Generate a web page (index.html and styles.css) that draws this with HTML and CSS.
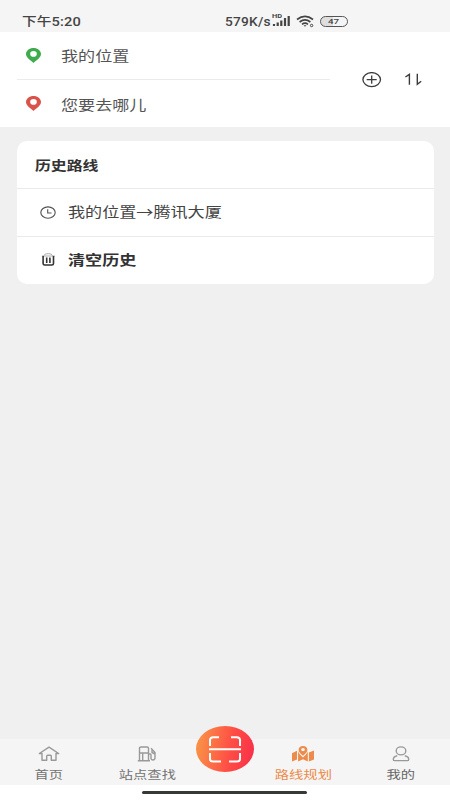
FILE: index.html
```html
<!DOCTYPE html>
<html lang="zh-CN">
<head>
<meta charset="utf-8">
<title>路线规划</title>
<link rel="stylesheet" href="styles.css">
</head>
<body>
<div class="app">
  <header class="status">
    <span class="wide time">下午5:20</span>
    <div class="signals">
      <span class="wide speed">579K/s</span>
      <svg class="cell" width="19" height="14" viewBox="0 0 19 14">
        <text x="0" y="5" textLength="10" lengthAdjust="spacingAndGlyphs">HD</text>
        <path d="M2 13V11M5.7 13V9.5M9.3 13V7.5M13 13V5M16.7 13V3" stroke="#444" stroke-width="2.2"/>
      </svg>
      <svg class="wifi" width="19" height="13" viewBox="0 0 19 13" fill="none" stroke="#444" stroke-width="1.7">
        <path d="M1 4.5Q9-1.8 17 4.5M3.6 7Q9 2.8 14.4 7M6 9.3Q9 7 12 9.3"/>
        <path d="M7.5 10.2H10.5L9 11.8Z" fill="#444" stroke="none"/>
        <circle cx="15.6" cy="10.5" r="1.2" stroke-width="1"/>
      </svg>
      <div class="battery"><span class="wide">47</span></div>
    </div>
  </header>

  <section class="route">
    <div class="places">
      <div class="place">
        <svg width="15" height="15" viewBox="0 0 15 15"><path fill="#3eac4d" fill-rule="evenodd" d="M7.5 0C3.3 0 0 2.6 0 6.1C0 9.4 4.2 12.2 7.5 15C10.8 12.2 15 9.4 15 6.1C15 2.6 11.7 0 7.5 0ZM7.5 3.1A3.3 2.8 0 1 1 7.5 8.7A3.3 2.8 0 1 1 7.5 3.1Z"/></svg>
        <span class="wide">我的位置</span>
      </div>
      <div class="place">
        <svg width="15" height="15" viewBox="0 0 15 15"><path fill="#d9534b" fill-rule="evenodd" d="M7.5 0C3.3 0 0 2.6 0 6.1C0 9.4 4.2 12.2 7.5 15C10.8 12.2 15 9.4 15 6.1C15 2.6 11.7 0 7.5 0ZM7.5 3.1A3.3 2.8 0 1 1 7.5 8.7A3.3 2.8 0 1 1 7.5 3.1Z"/></svg>
        <span class="wide">您要去哪儿</span>
      </div>
    </div>
    <div class="actions">
      <svg width="20" height="16" viewBox="0 0 20 16" fill="none" stroke="#3c3c3c" stroke-width="1.3"><ellipse cx="9.7" cy="7.6" rx="8.8" ry="7"/><path d="M4.7 7.6H14.7M9.7 3.4V11.8"/></svg>
      <svg width="18" height="13" viewBox="0 0 18 13" fill="none" stroke="#3c3c3c" stroke-width="1.4"><path d="M.4 4L4.4 1.4V11.8M12.3 .8V11.3L16.2 8.3"/></svg>
    </div>
  </section>

  <main class="content">
    <section class="card">
      <h1 class="row title"><span class="wide">历史路线</span></h1>
      <div class="row">
        <svg width="16" height="13" viewBox="0 0 16 13" fill="none" stroke="#555" stroke-width="1.15"><ellipse cx="8" cy="6.5" rx="7.2" ry="5.7"/><path d="M7.7 3.2V7H11.5"/></svg>
        <span class="wide">我的位置→腾讯大厦</span>
      </div>
      <div class="row clear">
        <svg width="16" height="14" viewBox="0 0 16 14" fill="none" stroke="#333"><path d="M4 2.6Q4.2 .6 8.2.6T12.4 2.6" stroke="#999" stroke-width=".8"/><path d="M1.8 3H14.8" stroke="#999" stroke-width=".8"/><path d="M3.1 3V10.6Q3.1 12 4.8 12H11.8Q13.5 12 13.5 10.6V3" stroke-width="1.6"/><path d="M6.7 4.4V10M9.9 4.4V10" stroke-width="1.6"/></svg>
        <span class="wide">清空历史</span>
      </div>
    </section>
  </main>

  <nav class="tabs">
    <div class="tab home">
      <svg width="22" height="16" viewBox="0 0 22 16" fill="none" stroke="#999" stroke-width="1.4" stroke-linejoin="round"><path d="M4 7.5H1.3L11 1.2L20.7 7.5H18V14.2H13.3V10.2Q13.3 9.3 12.3 9.3H9.7Q8.7 9.3 8.7 10.2V14.2H4Z"/></svg>
      <span class="wide">首页</span>
    </div>
    <div class="tab station">
      <svg width="20" height="16" viewBox="0 0 20 16" fill="none" stroke="#999" stroke-width="1.4"><path d="M2.5 15V2.2Q2.5 1 4 1H10Q11.5 1 11.5 2.2V15M.8 14.8H13M2.5 7H11.5M5.7 7V14.5M11.5 8H13.2Q14 8 14 9V12.6Q14 14 15.8 14T18 12.3V6.5L14 2.2M15 3.3V6.5L18 8"/></svg>
      <span class="wide">站点查找</span>
    </div>
    <div class="scan">
      <svg width="32" height="27" viewBox="0 0 32 27" fill="none" stroke="#fff" stroke-width="2"><path d="M1 10V4Q1 1.2 4.3 1.2H10M22 1.2H27.7Q31 1.2 31 4V10M1 17V23Q1 25.5 4.3 25.5H12M20 25.5H27.7Q31 25.5 31 23V17M0 13.3H32"/></svg>
    </div>
    <div class="tab plan">
      <svg width="22" height="16" viewBox="0 0 22 16" fill="#ec8b4a"><path d="M0 7.2L5 4.8V13.4L0 15.4ZM6.1 5.1C6.5 7.6 9 9.7 11 11.5C13 9.7 15.2 7.7 15.8 5.3V15.4L11 13.2L6.1 15.4ZM16.9 6.4L22 4.6V13.4L16.9 15.4Z"/><path fill-rule="evenodd" d="M11 0C8.5 0 6.6 1.5 6.6 3.7C6.6 6 9 8 11 9.8C13 8 15.4 6 15.4 3.7C15.4 1.5 13.5 0 11 0ZM11 2A1.9 1.6 0 1 1 11 5.2A1.9 1.6 0 1 1 11 2Z"/></svg>
      <span class="wide">路线规划</span>
    </div>
    <div class="tab mine">
      <svg width="18" height="16" viewBox="0 0 18 16" fill="none" stroke="#999" stroke-width="1.4"><ellipse cx="9" cy="4.9" rx="4.8" ry="4"/><path d="M5.2 9.8Q1.3 10.7 1.3 13.4Q1.3 14.6 2.8 14.6H15.2Q16.7 14.6 16.7 13.4Q16.7 10.7 12.8 9.8"/></svg>
      <span class="wide">我的</span>
    </div>
  </nav>
  <footer class="gesture"><div class="handle"></div></footer>
</div>
</body>
</html>
```
FILE: styles.css
```css
* { box-sizing: border-box; }
body { margin: 0; font-family: Roboto, "Noto Sans CJK SC", sans-serif; color: #444; }
svg { display: block; flex: none; }
.app { width: 450px; height: 800px; display: flex; flex-direction: column; background: #f0f0f0; overflow: hidden; }

/* Expanded letterforms */
.wide { display: inline-block; white-space: nowrap; transform: scaleX(1.22); transform-origin: left center; }

.status { height: 32px; flex: none; display: flex; justify-content: space-between; padding: 12px 102px 0 22px; background: #f5f5f5; line-height: 20px; }
.time { font-size: 12px; font-weight: 500; letter-spacing: .1px; }
.signals { display: flex; align-items: center; height: 20px; margin-top: -1px; }
.speed { width: 46px; font-size: 12px; font-weight: 500; letter-spacing: .2px; transform: scaleX(1.14); margin-top: 2px; }
.cell { margin: -2px 5px 0 1px; }
.cell text { font: 700 6px Roboto, sans-serif; fill: #444; }
.wifi { margin-right: 5px; }
.battery { width: 28px; height: 11px; border: 1px solid #555; border-radius: 6px; background: linear-gradient(90deg, #dedede 48%, #f5f5f5 48%); display: flex; align-items: center; justify-content: center; font-size: 8px; font-weight: 500; line-height: 9px; }
.battery .wide { transform-origin: center; }

.route { height: 95px; flex: none; display: flex; background: #fff; }
.places { width: 313px; margin-left: 17px; }
.place { height: 48px; display: flex; align-items: center; padding-left: 9px; gap: 20px; font-size: 14px; color: #555; }
.place:first-child { border-bottom: 1px solid #ebebeb; }
.place svg { margin-top: -1px; }
.place .wide { margin-top: -1px; }
.actions { display: flex; align-items: center; gap: 23px; padding-left: 32px; }

.content { flex: 1; padding: 14px 16px 0 17px; }
.card { height: 143px; background: #fff; border-radius: 10px; overflow: hidden; }
.row { height: 48px; display: flex; align-items: center; gap: 12px; padding-left: 23px; border-bottom: 1px solid #eaeaea; font-size: 14px; color: #444; }
.row .wide { margin-top: -3px; }
.row.title { margin: 0; padding-left: 18px; font-size: 13px; font-weight: 700; color: #333; }
.title .wide { margin-top: 0; }
.clear { height: 47px; border: 0; font-weight: 700; color: #333; }
.clear svg { margin-top: -1px; }

.tabs { height: 46px; flex: none; background: #f5f5f5; display: grid; grid-template-columns: 98px 98px 58px 98px 98px; }
.tab { display: flex; flex-direction: column; align-items: center; padding-top: 7px; font-size: 11.7px; line-height: 18px; gap: 4px; color: #737373; }
.tab .wide { transform-origin: center; }
.plan { color: #ec8b4a; }
.mine { color: #666; }
.scan { width: 58px; height: 46px; margin-top: -13px; border-radius: 50%; background: linear-gradient(100deg, #f99446 5%, #ff4c45 60%, #f72d4a); display: flex; align-items: center; justify-content: center; }
.gesture { height: 15px; flex: none; background: #fff; padding: 6px 0 0 142px; }
.handle { width: 165px; height: 3px; border-radius: 2px; background: #353a37; }
```
